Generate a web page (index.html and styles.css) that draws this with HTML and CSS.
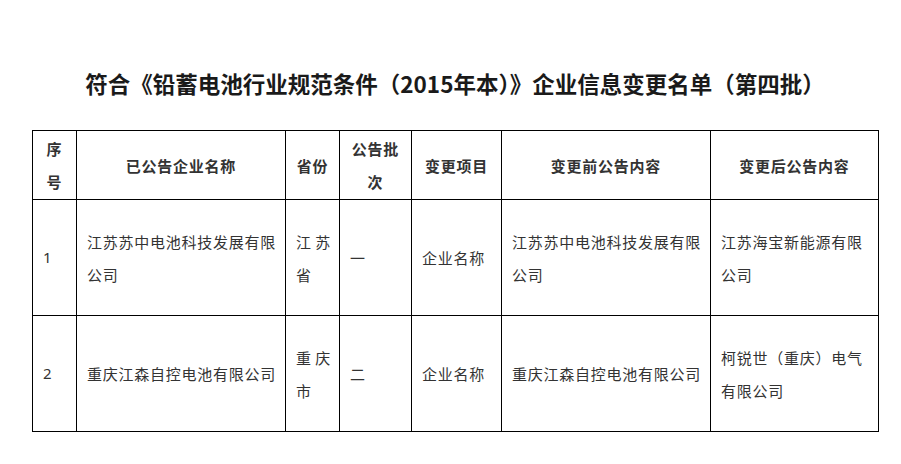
FILE: index.html
```html
<!DOCTYPE html>
<html lang="zh-CN">
<head>
<meta charset="utf-8">
<link rel="stylesheet" href="styles.css">
</head>
<body>
<div class="page">
  <h1 class="title">符合《铅蓄电池行业规范条件（2015年本）》企业信息变更名单（第四批）</h1>
  <table class="list">
    <colgroup>
      <col class="c1"><col class="c2"><col class="c3"><col class="c4"><col class="c5"><col class="c6"><col class="c7">
    </colgroup>
    <thead>
      <tr class="head">
        <th>序号</th>
        <th>已公告企业名称</th>
        <th>省份</th>
        <th>公告批次</th>
        <th>变更项目</th>
        <th>变更前公告内容</th>
        <th>变更后公告内容</th>
      </tr>
    </thead>
    <tbody>
      <tr class="row">
        <td class="num">1</td>
        <td>江苏苏中电池科技发展有限公司</td>
        <td class="prov">江苏省</td>
        <td>一</td>
        <td>企业名称</td>
        <td>江苏苏中电池科技发展有限公司</td>
        <td>江苏海宝新能源有限公司</td>
      </tr>
      <tr class="row">
        <td class="num">2</td>
        <td>重庆江森自控电池有限公司</td>
        <td class="prov">重庆市</td>
        <td>二</td>
        <td>企业名称</td>
        <td>重庆江森自控电池有限公司</td>
        <td>柯锐世（重庆）电气有限公司</td>
      </tr>
    </tbody>
  </table>
</div>
</body>
</html>
```

FILE: styles.css
```css
html, body {
  margin: 0;
  padding: 0;
  background: #fff;
}
body {
  font-family: "Noto Sans CJK SC", "Microsoft YaHei", sans-serif;
  color: #333;
}
.page {
  padding: 0 0 0 32px;
}
.title {
  margin: 0 0 32px 0;
  padding-top: 68px;
  width: 846px;
  text-align: center;
  font-size: 22.5px;
  font-weight: bold;
  line-height: 30px;
  color: #1a1a1a;
}
.list {
  border-collapse: collapse;
  table-layout: fixed;
  width: 846px;
  font-size: 15px;
  letter-spacing: 0.75px;
}
.c1 { width: 44px; }
.c2 { width: 209px; }
.c3 { width: 54px; }
.c4 { width: 72px; }
.c5 { width: 90px; }
.c6 { width: 209px; }
.c7 { width: 168px; }
.list th, .list td {
  border: 1px solid #000;
  padding: 0 8px 0 10px;
  line-height: 33px;
  vertical-align: middle;
  word-break: break-all;
}
.list th {
  font-weight: bold;
  text-align: center;
  padding: 0 8px;
  height: 68px;
}
.list td {
  text-align: left;
  height: 115px;
}
.list td.num {
  font-family: "Noto Sans", "Open Sans", sans-serif;
}
.list td.prov {
  text-align: justify;
  text-align-last: left;
}
```
